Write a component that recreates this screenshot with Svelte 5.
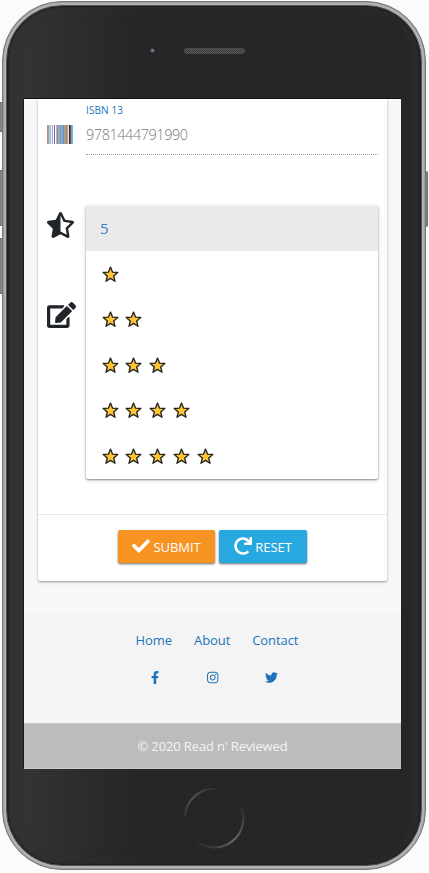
<script>
  const ratings = [1, 2, 3, 4, 5];
  const bars = [
    [0, 1, '#c48a78'], [1, 1, '#a9a98e'], [2, 2, '#a9c7ea'], [4, 1, '#e4ecfa'], [5, 1, '#a5aed6'], [7, 1, '#7d5aa5'],
    [9, 1, '#b3bda8'], [10, 1, '#8c86b0'], [11, 1, '#c3a58a'], [12, 1, '#79b1ea'], [13, 1, '#6b9fe0'],
    [14, 1, '#b4a08c'], [15, 1, '#7aa4c4'], [16, 1, '#4f9be8'], [17, 1, '#c59b70'], [18, 1, '#7da6d0'],
    [19, 1, '#a98a68'], [20, 1, '#c9a05c'], [21, 1, '#dce8fa'], [22, 1, '#4b2348'], [23, 1, '#65506c'],
    [24, 1, '#8ca0a6'], [25, 1, '#66b8f0']
  ];
</script>

<div class="page">
  <i class="side mute"></i><i class="side up"></i><i class="side down"></i><i class="side power"></i>
  <div class="phone">
    <div class="face">
      <div class="top"><i class="camera"></i><i class="speaker"></i></div>
      <div class="screen">
        <main>
          <section class="card">
            <div class="fields">
              <div class="icons">
                <svg class="barcode" viewBox="0 0 26 19" shape-rendering="crispEdges">
                  {#each bars as [x, w, fill]}<rect {x} y="0" width={w} height="19" {fill} />{/each}
                </svg>
                <svg class="half" viewBox="0 0 536 512"><path d="M508.55 171.51L362.18 150.2 296.77 17.81C290.89 5.98 279.42 0 267.95 0c-11.4 0-22.79 5.9-28.69 17.81l-65.43 132.38-146.38 21.29c-26.25 3.8-36.77 36.09-17.74 54.59l105.89 103-25.06 145.48C86.98 495.33 103.57 512 122.15 512c4.93 0 10-1.17 14.87-3.75l130.95-68.68 130.94 68.7c4.86 2.55 9.92 3.71 14.83 3.71 18.6 0 35.22-16.61 31.66-37.4l-25.03-145.49 105.91-102.98c19.04-18.5 8.52-50.8-17.73-54.6zm-121.74 123.2l-18.12 17.62 4.28 24.88 19.52 113.45-102.13-53.59-22.38-11.74.03-317.19 51.03 103.29 11.18 22.63 25.01 3.64 114.23 16.63-82.65 80.38z" /></svg>
                <svg class="edit" viewBox="0 0 576 512"><path d="M402.6 83.2l90.2 90.2c3.8 3.8 3.8 10 0 13.8L274.4 405.6l-92.8 10.3c-12.4 1.4-22.9-9.1-21.5-21.5l10.3-92.8L388.8 83.2c3.8-3.8 10-3.8 13.8 0zm162-22.9l-48.8-48.8c-15.2-15.2-39.9-15.2-55.2 0l-35.4 35.4c-3.8 3.8-3.8 10 0 13.8l90.2 90.2c3.8 3.8 10 3.8 13.8 0l35.4-35.4c15.2-15.3 15.2-40 0-55.2zM384 346.2V448H64V128h229.8c3.2 0 6.2-1.3 8.5-3.5l40-40c7.6-7.6 2.2-20.5-8.5-20.5H48C21.5 64 0 85.5 0 112v352c0 26.5 21.5 48 48 48h352c26.5 0 48-21.5 48-48V306.2c0-10.7-12.9-16-20.5-8.5l-40 40c-2.2 2.3-3.5 5.3-3.5 8.5z" /></svg>
              </div>
              <div class="inputs">
                <div class="label">ISBN 13</div>
                <div class="value">9781444791990</div>
                <ul class="menu">
                  <li class="current">5</li>
                  {#each ratings as count}
                    <li>
                      {#each Array(count) as _}
                        <svg class="star" viewBox="0 0 17 17"><path d="M8.5 1.1l2 5 5.3.4-4.1 3.5 1.3 5.3-4.5-2.9L4 15.3 5.3 10 1.2 6.5l5.3-.4z" /></svg>
                      {/each}
                    </li>
                  {/each}
                </ul>
              </div>
            </div>
            <div class="actions">
              <button class="submit"><svg viewBox="0 0 512 512"><path d="M173.898 439.404l-166.4-166.4c-9.997-9.997-9.997-26.206 0-36.204l36.203-36.204c9.997-9.998 26.207-9.998 36.204 0L192 312.69 432.095 72.596c9.997-9.997 26.207-9.997 36.204 0l36.203 36.204c9.997 9.997 9.997 26.206 0 36.204l-294.4 294.401c-9.998 9.997-26.207 9.997-36.204-.001z" /></svg><span>SUBMIT</span></button>
              <button class="reset"><svg viewBox="0 0 512 512"><path d="M500.33 0h-47.41a12 12 0 0 0-12 12.57l4 82.76A247.42 247.42 0 0 0 256 8C119.34 8 7.9 119.53 8 256.19 8.1 393.07 119.1 504 256 504a247.1 247.1 0 0 0 166.18-63.91 12 12 0 0 0 .48-17.43l-34-34a12 12 0 0 0-16.38-.55A176 176 0 1 1 402.1 157.8l-101.53-4.87a12 12 0 0 0-12.57 12v47.41a12 12 0 0 0 12 12h200.33a12 12 0 0 0 12-12V12a12 12 0 0 0-12-12z" /></svg><span>RESET</span></button>
            </div>
          </section>
        </main>
        <footer>
          <nav class="links"><a href="#home">Home</a><a href="#about">About</a><a href="#contact">Contact</a></nav>
          <div class="links social">
            <span><svg viewBox="0 0 320 512"><path d="M279.14 288l14.22-92.66h-88.91v-60.13c0-25.35 12.42-50.06 52.24-50.06h40.42V6.26S260.43 0 225.36 0c-73.22 0-121.08 44.38-121.08 124.72v70.62H22.89V288h81.39v224h100.17V288z" /></svg></span>
            <span><svg viewBox="0 0 448 512"><path d="M224.1 141c-63.6 0-114.9 51.3-114.9 114.9s51.3 114.9 114.9 114.9S339 319.5 339 255.9 287.7 141 224.1 141zm0 189.6c-41.1 0-74.7-33.5-74.7-74.7s33.5-74.7 74.7-74.7 74.7 33.5 74.7 74.7-33.6 74.7-74.7 74.7zm146.4-194.3c0 14.9-12 26.8-26.8 26.8-14.9 0-26.8-12-26.8-26.8s12-26.8 26.8-26.8 26.8 12 26.8 26.8zm76.1 27.2c-1.7-35.9-9.9-67.7-36.2-93.9-26.2-26.2-58-34.4-93.9-36.2-37-2.1-147.9-2.1-184.9 0-35.8 1.7-67.6 9.9-93.9 36.1s-34.4 58-36.2 93.9c-2.1 37-2.1 147.9 0 184.9 1.7 35.9 9.9 67.7 36.2 93.9s58 34.4 93.9 36.2c37 2.1 147.9 2.1 184.9 0 35.9-1.7 67.7-9.9 93.9-36.2 26.2-26.2 34.4-58 36.2-93.9 2.1-37 2.1-147.8 0-184.8zM398.8 388c-7.8 19.6-22.9 34.7-42.6 42.6-29.5 11.7-99.5 9-132.1 9s-102.7 2.6-132.1-9c-19.6-7.8-34.7-22.9-42.6-42.6-11.7-29.5-9-99.5-9-132.1s-2.6-102.7 9-132.1c7.8-19.6 22.9-34.7 42.6-42.6 29.5-11.7 99.5-9 132.1-9s102.7-2.6 132.1 9c19.6 7.8 34.7 22.9 42.6 42.6 11.7 29.5 9 99.5 9 132.1s2.7 102.7-9 132.1z" /></svg></span>
            <span><svg viewBox="0 0 512 512"><path d="M459.37 151.716c.325 4.548.325 9.097.325 13.645 0 138.72-105.583 298.558-298.558 298.558-59.452 0-114.68-17.219-161.137-47.106 8.447.974 16.568 1.299 25.34 1.299 49.055 0 94.213-16.568 130.274-44.832-46.132-.975-84.792-31.188-98.112-72.772 6.498.974 12.995 1.624 19.818 1.624 9.421 0 18.843-1.3 27.614-3.573-48.081-9.747-84.143-51.98-84.143-102.985v-1.299c13.969 7.797 30.214 12.67 47.431 13.319-28.264-18.843-46.781-51.005-46.781-87.391 0-19.492 5.197-37.36 14.294-52.954 51.655 63.675 129.3 105.258 216.365 109.807-1.624-7.797-2.599-15.918-2.599-24.04 0-57.828 46.782-104.934 104.934-104.934 30.213 0 57.502 12.67 76.67 33.137 23.715-4.548 46.456-13.32 66.599-25.34-7.798 24.366-24.366 44.833-46.132 57.827 21.117-2.273 41.584-8.122 60.426-16.243-14.292 20.791-32.161 39.308-52.628 54.253z" /></svg></span>
          </div>
          <div class="copyright">© 2020 Read n' Reviewed</div>
        </footer>
      </div>
      <div class="home">
        <svg viewBox="0 0 64 64" stroke-linecap="round">
          <defs>
            <linearGradient id="arcA" x1="2" y1="34" x2="34" y2="2" gradientUnits="userSpaceOnUse"><stop stop-color="#303030" /><stop offset=".5" stop-color="#545454" /><stop offset="1" stop-color="#2c2c2c" /></linearGradient>
            <linearGradient id="arcB" x1="60" y1="20" x2="18" y2="58" gradientUnits="userSpaceOnUse"><stop stop-color="#2c2c2c" /><stop offset=".5" stop-color="#6c6c6c" /><stop offset="1" stop-color="#303030" /></linearGradient>
          </defs>
          <path d="M3 30A29 29 0 0 1 35 3" stroke="url(#arcA)" stroke-width="2" />
          <path d="M59.5 22A29 29 0 0 1 17 57" stroke="url(#arcB)" stroke-width="2" />
        </svg>
      </div>
    </div>
  </div>
</div>

<style>
  :global(body) { background: #fbfbfb; }
  * { box-sizing: border-box; }
  .page { position: relative; width: 429px; height: 873px; padding: 1px 0 0 2px; overflow: hidden; background: #fbfbfb; font-family: "Open Sans", "Noto Sans", sans-serif; }
  .side { position: absolute; left: 0; width: 4px; background: #858585; border: 1px solid #6b6b6b; border-left: 0; }
  .mute { top: 102px; height: 30px; }
  .up { top: 170px; height: 56px; }
  .down { top: 238px; height: 56px; }
  .power { left: 424px; top: 171px; width: 4px; height: 56px; border-radius: 0 2px 2px 0; }
  .phone { position: relative; width: 424px; height: 869px; border-radius: 60px; border: 1px solid #777; background: #b1b1b1; padding: 3px; box-shadow: inset 0 0 0 .5px #8c8c8c; }
  .face { height: 861px; border-radius: 56px; border: 1px solid #555; background: linear-gradient(90deg, #222 0, #333 4px, #333 18px, #262626 130px, #262626 398px, #292929 409px, #202020 100%); box-shadow: inset 0 0 2px 1px #1c1c1c, inset 0 0 8px 5px rgba(49,49,49,.5); padding: 0 17px; }
  .top { height: 93px; display: flex; align-items: flex-start; }
  .camera { width: 13px; height: 13px; margin: 38px 0 0 122px; border-radius: 50%; background: radial-gradient(circle, #74747e 0 1px, #3c3c48 2px, #1f1f25 3.5px, #242329 5px, #262626 6.5px); }
  .speaker { width: 61px; height: 6px; margin: 42px 0 0 25px; border-radius: 3px; background: repeating-conic-gradient(#565656 0 25%, #3c3c3c 0 50%) 0 0 / 2px 2px; }
  .screen { width: 377px; height: 670px; overflow: hidden; background: #f8f8f8; box-shadow: 0 -1px #111, -1px 0 #1b1b1b; }
  main { height: 514px; padding: 0 14px; }
  .card { width: 349px; height: 482px; background: #fff; border-radius: 0 0 2px 2px; box-shadow: 0 1px 2px rgba(0,0,0,.32), 0 2px 4px rgba(0,0,0,.08); }
  .fields { height: 415px; display: flex; }
  .icons { width: 48px; padding: 26px 0 0 9px; display: flex; flex-direction: column; align-items: flex-start; }
  svg { display: block; flex: none; fill: currentColor; }
  .icons svg { color: #212529; }
  .barcode { width: 26px; height: 19px; }
  .half { width: 27px; height: 26px; margin-top: 68px; }
  .edit { width: 29px; height: 26px; margin-top: 64px; }
  .inputs { width: 292px; }
  .label { height: 24px; padding-top: 4px; font-size: 10px; letter-spacing: .12px; line-height: 15px; color: #1c75bc; }
  .value { height: 32px; border-bottom: 1px dotted #999; font-size: 14.4px; letter-spacing: -.4px; line-height: 24px; color: #777; font-weight: 300; }
  .menu { list-style: none; margin: 51px 0 0 0; padding: 0; height: 273px; width: 292px; border-radius: 2px; background: #fff; box-shadow: 0 1px 2px rgba(0,0,0,.4), 0 1px 5px rgba(0,0,0,.15); }
  .menu li { height: 45.5px; padding: 1px 0 0 15.5px; display: flex; align-items: center; gap: 6.8px; }
  .menu .current { height: 45px; padding: 0 0 1px 14px; background: #eaeaea; color: #3c7fc4; font-size: 15px; }
  .star { width: 17px; height: 17px; }
  .star path { fill: #ffc533; stroke: #24241f; stroke-width: 1.35; stroke-linejoin: round; }
  .actions { height: 67px; border-top: 1px solid #e8e8e8; display: flex; justify-content: center; gap: 4px; padding: 15px 0 0; }
  button { height: 33px; border: 0; border-radius: 2px; padding: 0; display: flex; justify-content: center; color: #fff; font: 13px/35px "Open Sans", sans-serif; gap: 3px; box-shadow: 0 1px 2px rgba(0,0,0,.5), 0 2px 3px rgba(0,0,0,.1); }
  button svg { width: 18px; height: 18px; margin-top: 7px; }
  button span { letter-spacing: -.05px; }
  .submit { width: 97px; background: #f79321; }
  .reset { width: 88px; background: #28a8e0; }
  footer { height: 156px; background: #f4f4f4; padding-top: 17px; color: #1c75bc; }
  .links { height: 36px; display: flex; justify-content: center; font-size: 13px; letter-spacing: -.08px; line-height: 20px; gap: 22px; padding-left: 9px; }
  .links a { color: inherit; text-decoration: none; }
  .social { height: 57px; gap: 0; padding: 3px 0 0 1px; }
  .social span { width: 58px; display: flex; justify-content: center; }
  .social svg { height: 13px; margin-top: 2px; }
  .copyright { height: 46px; background: #bcbcbc; border-top: 1px solid #c8c8c8; border-bottom: 1px solid #cacaca; text-align: center; color: #f4f4f4; font-size: 13px; letter-spacing: -.13px; line-height: 45px; }
  .home { height: 88px; padding: 17px 0 0 158px; }
  .home svg { width: 64px; height: 64px; fill: none; }
</style>
